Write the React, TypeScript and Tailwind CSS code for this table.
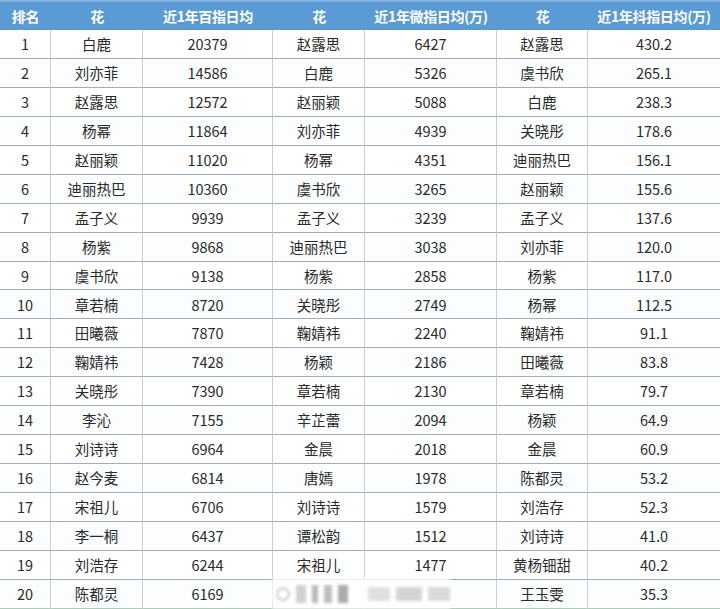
import React from "react";

const headers = ["排名", "花", "近1年百指日均", "花", "近1年微指日均(万)", "花", "近1年抖指日均(万)"];

const rows: string[][] = [
  ["1", "白鹿", "20379", "赵露思", "6427", "赵露思", "430.2"],
  ["2", "刘亦菲", "14586", "白鹿", "5326", "虞书欣", "265.1"],
  ["3", "赵露思", "12572", "赵丽颖", "5088", "白鹿", "238.3"],
  ["4", "杨幂", "11864", "刘亦菲", "4939", "关晓彤", "178.6"],
  ["5", "赵丽颖", "11020", "杨幂", "4351", "迪丽热巴", "156.1"],
  ["6", "迪丽热巴", "10360", "虞书欣", "3265", "赵丽颖", "155.6"],
  ["7", "孟子义", "9939", "孟子义", "3239", "孟子义", "137.6"],
  ["8", "杨紫", "9868", "迪丽热巴", "3038", "刘亦菲", "120.0"],
  ["9", "虞书欣", "9138", "杨紫", "2858", "杨紫", "117.0"],
  ["10", "章若楠", "8720", "关晓彤", "2749", "杨幂", "112.5"],
  ["11", "田曦薇", "7870", "鞠婧祎", "2240", "鞠婧祎", "91.1"],
  ["12", "鞠婧祎", "7428", "杨颖", "2186", "田曦薇", "83.8"],
  ["13", "关晓彤", "7390", "章若楠", "2130", "章若楠", "79.7"],
  ["14", "李沁", "7155", "辛芷蕾", "2094", "杨颖", "64.9"],
  ["15", "刘诗诗", "6964", "金晨", "2018", "金晨", "60.9"],
  ["16", "赵今麦", "6814", "唐嫣", "1978", "陈都灵", "53.2"],
  ["17", "宋祖儿", "6706", "刘诗诗", "1579", "刘浩存", "52.3"],
  ["18", "李一桐", "6437", "谭松韵", "1512", "刘诗诗", "41.0"],
  ["19", "刘浩存", "6244", "宋祖儿", "1477", "黄杨钿甜", "40.2"],
  ["20", "陈都灵", "6169", "", "", "王玉雯", "35.3"],
];

export default function App() {
  return (
    <div
      className="relative w-[720px] h-[609px] overflow-hidden bg-white"
      style={{ fontFamily: '"Noto Sans CJK SC", "Noto Sans", sans-serif' }}
    >
      <div className="grid grid-cols-[51px_92px_130px_92px_132px_91px_132px]">
        {headers.map((h, i) => (
          <div
            key={"h" + i}
            className="h-[30px] flex items-center justify-center bg-[#5b9bd5] border-t-2 border-t-[#7fb0de] text-white font-bold text-[14px] tracking-tight"
          >
            {h}
          </div>
        ))}
        {rows.map((r, ri) =>
          r.map((c, ci) => (
            <div
              key={ri + "-" + ci}
              className={
                "h-[28.95px] flex items-center justify-center text-[14.5px] text-[#2a2a2a] border-b " +
                (ri === rows.length - 1 ? "border-b-[#a8cdb8] " : "border-b-[#a3adb7] ") +
                (ci < 6 ? "border-r border-r-[#c7ccd2] " : "") +
                (ri % 2 === 1 ? "bg-[#fbfdfe]" : "bg-white")
              }
            >
              {c}
            </div>
          ))
        )}
      </div>
      {/* blurred watermark overlay */}
      <div className="absolute left-[272px] top-[578px] w-[178px] h-[31px] flex items-center gap-[6px] pl-[4px] bg-white/90 blur-[1.5px]">
        <div className="w-[14px] h-[14px] rounded-full border-2 border-[#c8c8c8]" />
        <div className="w-[10px] h-[18px] bg-[#d0d0d0]" />
        <div className="w-[6px] h-[18px] bg-[#b8b8b8]" />
        <div className="w-[8px] h-[18px] bg-[#bdbdbd]" />
        <div className="w-[10px] h-[18px] bg-[#aaaaaa]" />
        <div className="w-[22px] h-[14px] bg-[#e0e0e0] ml-[14px]" />
        <div className="w-[26px] h-[14px] bg-[#d4d4d4]" />
        <div className="w-[22px] h-[14px] bg-[#dadada]" />
      </div>
    </div>
  );
}
